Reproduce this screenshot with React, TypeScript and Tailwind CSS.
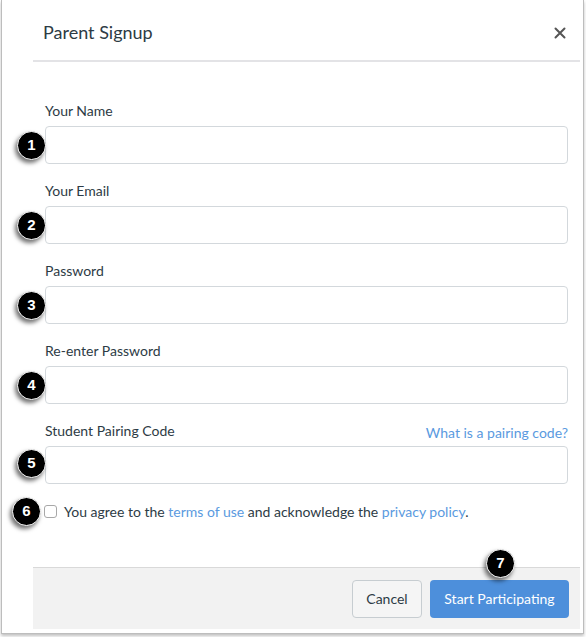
import React from "react";

function Badge({ n, className }: { n: number; className: string }) {
  return (
    <div
      className={
        "absolute flex h-[29px] w-[29px] items-center justify-center rounded-full border-[1.5px] border-white bg-black text-[15px] font-bold text-white shadow-[-2px_3px_4px_rgba(0,0,0,0.55)] " +
        className
      }
      style={{ fontFamily: "Arial, 'Liberation Sans', sans-serif" }}
    >
      {n}
    </div>
  );
}

function Field({ label, extra }: { label: string; extra?: React.ReactNode }) {
  return (
    <div className="flex flex-col pb-[16px]">
      <div className="flex h-[20px] items-center justify-between">
        <span className="text-[14px] text-[#2d3b45]">{label}</span>
        {extra}
      </div>
      <div className="mt-[6px] h-[38px] rounded-[4px] border border-[#d3d8dc] bg-white" />
    </div>
  );
}

export default function App() {
  return (
    <div
      className="relative h-[637px] w-[586px] bg-white"
      style={{ fontFamily: "Lato, 'Open Sans', sans-serif" }}
    >
      <div className="ml-[1px] flex h-[634px] w-[583px] flex-col border-x border-b border-[#bdbdbd] bg-white pl-[31px] pr-[3px] shadow-[0_2px_3px_rgba(0,0,0,0.25)]">
        <div className="flex h-[62px] items-center justify-between border-b-2 border-[#e3e3e6] pl-[10px] pr-[14px] pt-[4px]">
          <span className="text-[18px] text-[#2d3b45]">Parent Signup</span>
          <svg width="12" height="12" viewBox="0 0 12 12" className="mt-[1px]">
            <path d="M1.5 1.5 L10.5 10.5 M10.5 1.5 L1.5 10.5" stroke="#555555" strokeWidth="2" strokeLinecap="round" />
          </svg>
        </div>
        <div className="flex flex-col px-[12px] pt-[38px]">
          <Field label="Your Name" />
          <Field label="Your Email" />
          <Field label="Password" />
          <Field label="Re-enter Password" />
          <Field
            label="Student Pairing Code"
            extra={<span className="mt-[4px] text-[14px] text-[#5a9ae0]">What is a pairing code?</span>}
          />
        </div>
        <div className="flex items-center pl-[11px] pt-[1px] text-[14px] text-[#2d3b45]">
          <div className="h-[13px] w-[13px] rounded-[3px] border border-[#a8a8a8] bg-white" />
          <span className="ml-[7px]">
            You agree to the <span className="text-[#5a9ae0]">terms of use</span> and acknowledge the{" "}
            <span className="text-[#5a9ae0]">privacy policy</span>.
          </span>
        </div>
        <div className="flex-1" />
        <div className="mb-[4px] flex h-[62px] items-center justify-end gap-[8px] border-t border-[#d9d9d9] bg-[#f2f2f2] pr-[11px]">
          <div className="flex h-[38px] w-[70px] items-center justify-center rounded-[4px] border border-[#c7cdd1] bg-[#f5f5f5] text-[14px] text-[#2d3b45]">
            Cancel
          </div>
          <div className="flex h-[38px] w-[139px] items-center justify-center rounded-[4px] bg-[#4d8fdb] text-[14px] text-white">
            Start Participating
          </div>
        </div>
      </div>
      <Badge n={1} className="left-[17px] top-[131px]" />
      <Badge n={2} className="left-[17px] top-[211px]" />
      <Badge n={3} className="left-[17px] top-[291px]" />
      <Badge n={4} className="left-[17px] top-[371px]" />
      <Badge n={5} className="left-[17px] top-[449px]" />
      <Badge n={6} className="left-[12px] top-[497px]" />
      <Badge n={7} className="left-[486px] top-[549px]" />
    </div>
  );
}
